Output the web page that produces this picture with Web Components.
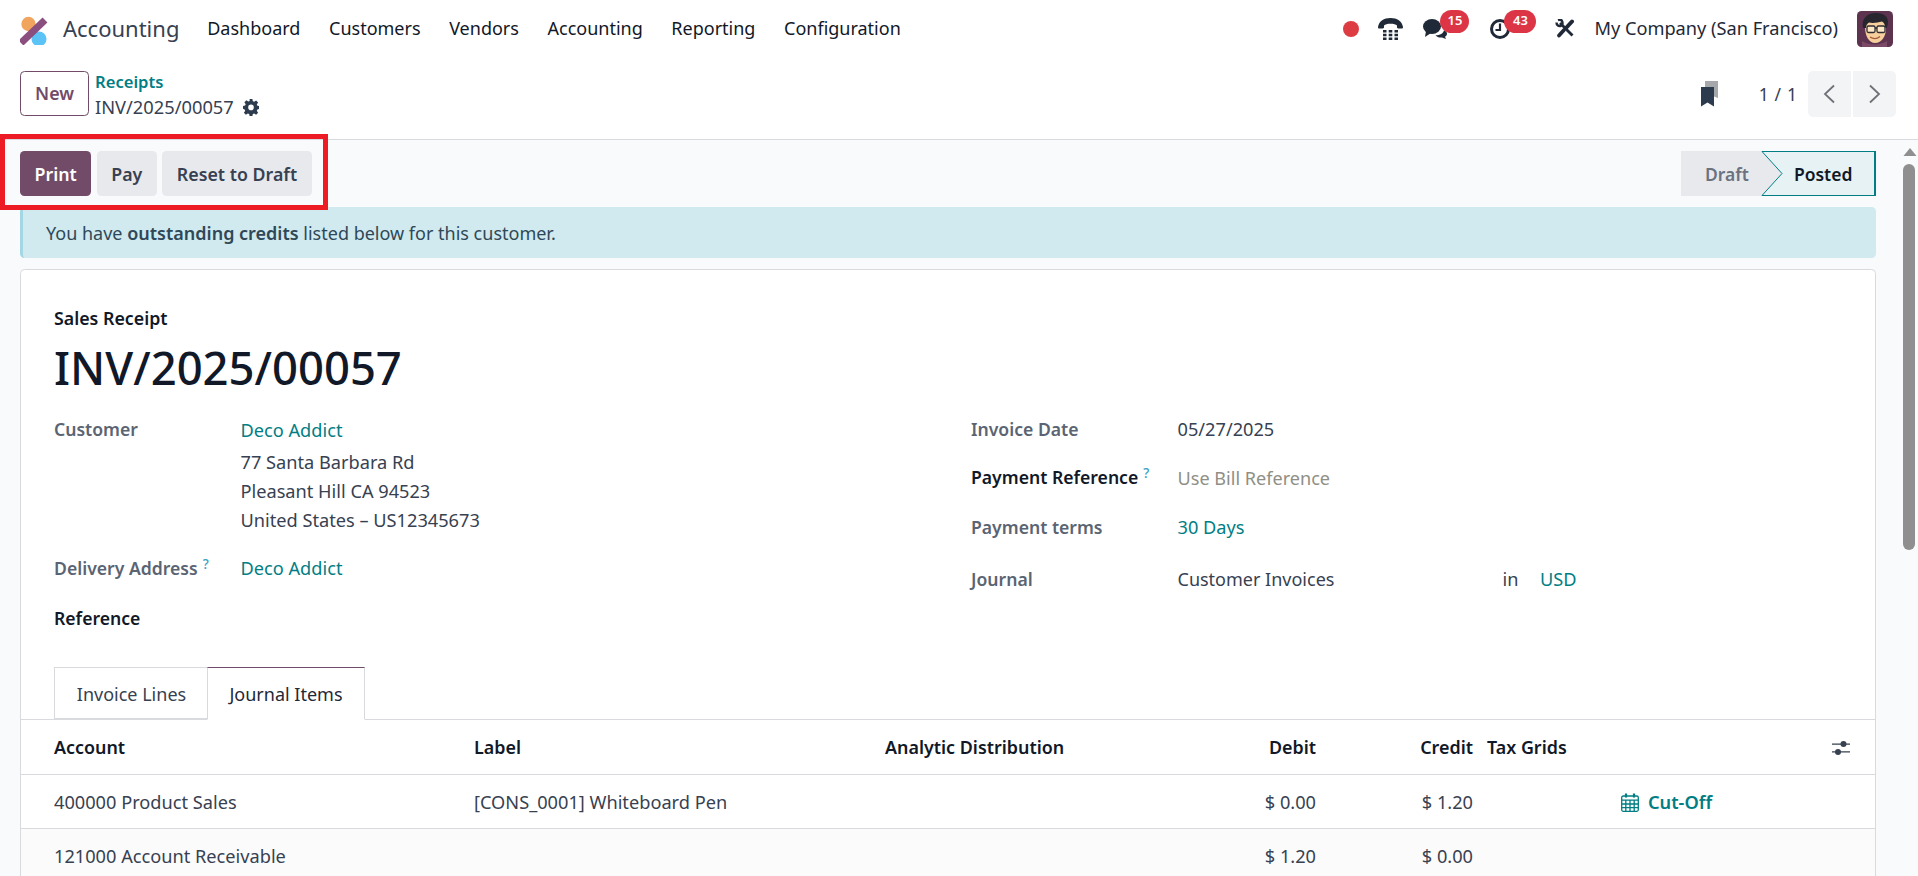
<!DOCTYPE html>
<html lang="en"><head><meta charset="utf-8"><title>Accounting</title>
<style>
html,body{margin:0;padding:0;height:100%;overflow:hidden;background:#fff}
body{font:18.2px/1.5 "Noto Sans","Open Sans",sans-serif;color:#374151}
</style></head><body>
<app-shell>
  <top-navbar slot="top"></top-navbar>
  <control-panel slot="top"></control-panel>
  <action-row>
    <act-btn kind="primary">Print</act-btn>
    <act-btn>Pay</act-btn>
    <act-btn>Reset to Draft</act-btn>
    <status-bar slot="end"></status-bar>
  </action-row>
  <info-alert>You have <b>outstanding credits</b> listed below for this customer.</info-alert>
  <form-card>
    <form-head></form-head>
    <form-groups slot="groups"></form-groups>
    <journal-tabs slot="tabs"></journal-tabs>
    <journal-table slot="table"></journal-table>
  </form-card>
</app-shell>
<script>
function def(name, html, init){
  customElements.define(name, class extends HTMLElement{
    constructor(){super();const r=this.attachShadow({mode:'open'});r.innerHTML=html;}
    connectedCallback(){if(init)init(this);}
  });
}
def('app-shell',`<style>
:host{display:flex;flex-direction:column;height:100vh;overflow:hidden;position:relative}
.main{flex:1;min-height:0;display:flex;background:#f9fafb}
.content{flex:1;min-width:0;padding:11px 25px 0 20px;overflow:hidden}
.red{position:absolute;left:0;top:134px;width:328px;height:76px;box-sizing:border-box;border:5px solid #ed1c24;pointer-events:none}
</style><slot name="top"></slot><div class="main"><div class="content"><slot></slot></div><page-scrollbar></page-scrollbar></div><div class="red"></div>`);

def('page-scrollbar',`<style>
:host{display:block;width:17px;flex:none;position:relative}
svg{display:block;margin:8px 0 0 2px}
.thumb{width:12px;height:386px;margin:8px 0 0 2px;border-radius:6px;background:#8f8f8f}
</style><svg width="14" height="8" viewBox="0 0 14 8"><path d="M7 0l6.5 8H.5z" fill="#8f8f8f"/></svg><div class="thumb"></div>`);

def('top-navbar',`<style>
:host{display:flex;align-items:center;height:57px;padding:0 25px 0 20px;background:#fff;color:#111827;box-sizing:border-box;font-size:18px}
.logo{width:29px;height:30px;flex:none;margin-top:2px}
.brand{font-size:22px;color:#374151;margin:0 13.500px 0 14px}
a{margin:0 14.300px;white-space:nowrap}
.tray{margin-left:auto;display:flex;align-items:center;height:100%}
.i{position:relative;display:flex;flex:none;align-items:center}
.b{position:absolute;top:9px;height:23px;border-radius:12px;background:#dc3545;color:#fff;font-size:13px;font-weight:600;display:flex;align-items:center;justify-content:center}
.co{margin:0 19px;white-space:nowrap;font-size:18.2px;color:#1f2937}
</style>
<svg class="logo" viewBox="0 0 29 30"><circle cx="8.500" cy="9" r="7.200" fill="#f0a45e"/><circle cx="19" cy="24" r="7.500" fill="#5cc3f7"/><path d="M1 28L25 5" stroke="#8b4f7f" stroke-width="7"/></svg>
<span class="brand">Accounting</span>
<a>Dashboard</a><a>Customers</a><a>Vendors</a><a>Accounting</a><a>Reporting</a><a>Configuration</a>
<div class="tray">
<span class="i"><svg width="16" height="16"><circle cx="8" cy="8" r="8" fill="#dc3c42"/></svg></span>
<span class="i" style="margin-left:19px"><svg width="25" height="22" viewBox="0 0 25 22" fill="#1f2937"><path d="M0 9C1 3 6 0 12.500 0S24 3 25 9c0 1-.5 1.500-1.200 1.500h-3.600c-.8 0-1.200-.5-1.200-1.200V7.500c-1-1.200-3.500-1.700-6.500-1.700S7 6.300 6 7.500v1.800c0 .7-.4 1.200-1.200 1.200H1.200C.5 10.500 0 10 0 9z"/><path d="M5 12h3.500v2.400H5zM10.700 12h3.600v2.400h-3.600zM16.500 12H20v2.400h-3.500zM5 15.800h3.500v2.400H5zM10.700 15.800h3.600v2.400h-3.600zM16.500 15.800H20v2.400h-3.500zM5 19.600h3.500V22H5zM10.700 19.600h3.600V22h-3.600zM16.500 19.600H20V22h-3.500z"/></svg></span>
<span class="i" style="margin-left:20px;width:24px;height:20px"><svg width="24" height="20" viewBox="0 0 24 20" fill="#1f2937"><ellipse cx="9" cy="7.500" rx="9" ry="7.500"/><path d="M3 12l-1 6 6-4z"/><path d="M12.500 16.200c4.500 0 8-2 8.500-5 2 .8 3 2 3 3.500 0 1.300-.9 2.400-2 3l1 2.300-4-1.600c-2.600.4-5-.5-6.500-2.200z"/></svg><span class="b" style="left:17px;width:29px;top:-9px">15</span></span>
<span class="i" style="margin-left:43px;width:20px;height:20px"><svg width="20" height="20" viewBox="0 0 20 20" fill="none" stroke="#1f2937"><circle cx="10" cy="10" r="8.500" stroke-width="3"/><path d="M10 4.500V11H5.500" stroke-width="2.200"/></svg><span class="b" style="left:14px;width:32px;top:-9px">43</span></span>
<span class="i" style="margin-left:45px"><svg width="20" height="20" viewBox="0 0 20 20" fill="none" stroke="#1f2937"><path d="M17 2.500L11 9" stroke-width="4" stroke-linecap="round"/><path d="M4 16.500L9 11" stroke-width="3.800" stroke-linecap="round"/><path d="M17.500 16.500L5 4" stroke-width="2.800"/><path d="M1.500 3.500c0 2.500 2 4 4 3.500S8 4 7 2 4.500 .5 3 1" stroke-width="2.400" fill="none"/></svg></span>
<span class="co">My Company (San Francisco)</span>
<svg width="36" height="36" viewBox="0 0 36 36" style="flex:none"><rect width="36" height="36" rx="4.500" fill="#5d3350"/><path d="M5 30c6 4 18 5 25 0v6H5z" fill="#7b4a66"/><path d="M8 16c0-6 5-9 11-9s10 4 10 10c0 8-4 15-11 15-6 0-10-7-10-16z" fill="#f6cf9c"/><path d="M6 17C4 8 10 2 19 2c7 0 12 3 12 9 0 2-.5 4-1.500 6l-1.500-.5c0-3-1-5-3-6-4 1-9 2-13 1-2 1-3 3-3 5.500z" fill="#27262f"/><rect x="10" y="15" width="8" height="6.500" rx="1.500" fill="#fbe7c4" stroke="#2e2b33" stroke-width="1.300"/><rect x="20" y="15" width="8" height="6.500" rx="1.500" fill="#fbe7c4" stroke="#2e2b33" stroke-width="1.300"/><path d="M18 17h2" stroke="#2e2b33" stroke-width="1.300"/><path d="M13 26c3 2 7 2 10-.5" stroke="#a35a3e" stroke-width="1.400" fill="none"/></svg>
</div>`);

def('control-panel',`<style>
:host{display:flex;align-items:flex-start;height:83px;box-sizing:border-box;padding:14px 22px 0 20px;background:#fff;border-bottom:1px solid #d8dadd}
.new{box-sizing:border-box;width:69px;height:45px;border:1px solid #714b67;border-radius:4.500px;display:flex;align-items:center;justify-content:center;color:#714b67;font-weight:600;flex:none;font-size:17.800px}
.crumb{margin-left:6px;line-height:24px;margin-top:-1px}
.crumb a{display:block;color:#017e84;font-weight:600;font-size:16.600px}
.crumb div{display:flex;align-items:center;gap:9px;color:#374151;margin-top:1px;font-size:18.300px}
.right{margin-left:auto;display:flex;align-items:center;height:46px}
.pg{margin:0 10.500px 0 41px;letter-spacing:.6px;color:#374151;font-size:17.500px}
.nb{width:43px;height:46px;background:#f3f4f6;display:flex;align-items:center;justify-content:center}
.nb.l{border-radius:5px 0 0 5px;margin-right:2px}.nb.r{border-radius:0 5px 5px 0}
</style>
<div class="new">New</div>
<div class="crumb"><a>Receipts</a><div>INV/2025/00057<svg width="16" height="17" viewBox="0 0 16 17" fill="#2d3b4e"><path fill-rule="evenodd" d="M6.600 0h2.800l.4 2.200 1.400.6 1.900-1.300 2 2-1.300 1.900.6 1.400 2.100.4v2.800l-2.100.4-.6 1.400 1.300 1.900-2 2-1.900-1.300-1.400.6-.4 2.200H6.600l-.4-2.200-1.400-.6-1.900 1.300-2-2 1.300-1.900-.6-1.400L0 9.800V7l2.100-.4.600-1.400L1.400 3.300l2-2 1.900 1.300 1.400-.6zM8 5.600a2.800 2.800 0 100 5.600 2.800 2.800 0 000-5.600z"/></svg></div></div>
<div class="right">
<svg width="18" height="26" viewBox="0 0 18 26"><path d="M5 0h13v17l-4-1.500V6H5z" fill="#a7a8ac"/><path d="M1 6h13v19.500l-6.500-4-6.500 4z" fill="#2d3b4e"/></svg>
<span class="pg">1 / 1</span>
<div class="nb l"><svg width="13" height="20" viewBox="0 0 13 20" fill="none" stroke="#6f7177" stroke-width="1.800"><path d="M11 1.500L2 10l9 8.500"/></svg></div>
<div class="nb r"><svg width="13" height="20" viewBox="0 0 13 20" fill="none" stroke="#6f7177" stroke-width="1.800"><path d="M2 1.500L11 10l-9 8.500"/></svg></div>
</div>`);

def('action-row',`<style>
:host{display:flex;gap:5.500px;height:45px;margin-bottom:11px}
.end{margin-left:auto}
</style><slot></slot><div class="end"><slot name="end"></slot></div>`);

def('act-btn',`<style>
:host{display:flex;align-items:center;height:45px;padding:1px 14.500px 0;border-radius:4.500px;background:#e7e9ed;color:#374151;font-weight:600;font-size:17.800px;box-sizing:border-box;white-space:nowrap}
:host([kind=primary]){background:#714b67;color:#fff}
</style><slot></slot>`);

def('status-bar',`<style>
:host{display:flex;position:relative;width:195px;height:45px;font-weight:600;font-size:17.500px}
svg{position:absolute;inset:0}
span{position:relative;display:flex;align-items:center;height:46px}
.d{margin-left:24px;color:#6b7280}
.p{margin-left:45px;color:#111827}
</style><svg width="195" height="45" viewBox="0 0 195 45"><rect width="102" height="45" fill="#e7e9ed"/><path d="M81 .5L101 22.500 81 44.500H194V.5z" fill="#e6f2f3"/><path d="M81 .5L101 22.500 81 44.500" fill="none" stroke="#017e84"/><path d="M81 .5H194.500V44.500H81" fill="none" stroke="#017e84"/><path d="M194 0v45" stroke="#017e84" stroke-width="2"/></svg><span class="d">Draft</span><span class="p">Posted</span>`);

def('info-alert',`<style>
:host{display:flex;align-items:center;height:51px;box-sizing:border-box;padding:1.500px 23px 0;background:#d0eaef;border-radius:4.500px;border-left:3px solid #a5d6e4;color:#2f4858;margin-bottom:11px;font-size:18px}
::slotted(b){font-weight:600}
</style><span><slot></slot></span>`);

def('form-card',`<style>
:host{display:block;background:#fff;border:1px solid #d8dadd;border-radius:4.500px 4.500px 0 0;height:800px;box-sizing:border-box}
.pad{padding:34px 33px 0 33px}
</style><div class="pad"><slot></slot><slot name="groups"></slot></div><slot name="tabs"></slot><slot name="table"></slot>`);

def('form-head',`<style>
:host{display:block;color:#111827}
.t{font-weight:600;font-size:17.800px;line-height:28px}
h1{margin:3px 0 0;font-size:45.400px;font-weight:500;line-height:64px;color:#111827}
</style><div class="t">Sales Receipt</div><h1>INV/2025/00057</h1>`);

def('form-field',`<style>
:host{display:grid;grid-template-columns:var(--lw,187px) 1fr;line-height:29px;min-height:29px;margin-bottom:var(--mb,0)}
.l{font-weight:600;font-size:17.600px;color:#5b6472}
:host([strong]) .l{color:#111827}
</style><div class="l"><slot name="label"></slot></div><div><slot></slot></div>`);

def('help-mark',`<style>:host{font-size:13.500px;color:#3a9fc4;vertical-align:6px;font-weight:500;margin-left:5px;line-height:0}</style><slot></slot>`);
def('link-text',`<style>:host{color:#017e84}</style><slot></slot>`);

def('form-groups',`<style>
:host{display:grid;grid-template-columns:917px 1fr;margin-top:15.500px}
.a{--lw:186.500px}.b{--lw:206.500px}
.mut{color:#8f8f85;position:relative;top:1px;font-size:18.100px}
.addr{display:block;margin-top:3px}.addr span{display:block}
.j{display:grid;grid-template-columns:325px 37.500px auto}
.j>span:first-child{font-size:18px}
</style>
<div class="a">
<form-field style="--mb:19px"><span slot="label">Customer</span><link-text style="display:block;padding-top:1px">Deco Addict</link-text><span class="addr"><span>77 Santa Barbara Rd</span><span>Pleasant Hill CA 94523</span><span>United States – US12345673</span></span></form-field>
<form-field style="--mb:21px"><span slot="label">Delivery Address<help-mark>?</help-mark></span><link-text>Deco Addict</link-text></form-field>
<form-field strong><span slot="label">Reference</span></form-field>
</div>
<div class="b">
<form-field style="--mb:19px"><span slot="label">Invoice Date</span>05/27/2025</form-field>
<form-field strong style="--mb:21px"><span slot="label">Payment Reference<help-mark>?</help-mark></span><span class="mut">Use Bill Reference</span></form-field>
<form-field style="--mb:23px"><span slot="label">Payment terms</span><link-text>30 Days</link-text></form-field>
<form-field><span slot="label">Journal</span><span class="j"><span>Customer Invoices</span><span>in</span><link-text>USD</link-text></span></form-field>
</div>`);

def('journal-tabs',`<style>
:host{display:flex;height:53px;box-sizing:border-box;padding-left:33px;margin-top:34.500px;border-bottom:1px solid #d8dadd;font-size:18px}
div{box-sizing:border-box;height:53px;display:flex;align-items:center;justify-content:center;border:1px solid #d8dadd;padding-top:2px}
.a{width:153px;border-right:0;height:52px;color:#374151;padding-left:1px}
.b{width:158px;border-top:1px solid #714b67;background:#fff;border-bottom:1px solid #fff;color:#1f2937}
</style><div class="a">Invoice Lines</div><div class="b">Journal Items</div>`);

def('table-row',`<style>
:host{display:grid;grid-template-columns:420px 411px 300px 131px 157px 14px 134px 1fr;align-items:center;height:54.500px;box-sizing:border-box;padding:2px 0 0 33px;border-bottom:1px solid #d8dadd;white-space:nowrap}
:host([head]){font-weight:600;color:#111827;font-size:17.900px}
:host([alt]){background:#fbfbfb}
::slotted(.n){text-align:right}
::slotted(.tax){grid-column:7}
::slotted(.cut){display:flex;align-items:center;gap:9px;color:#017e84;font-weight:600;grid-column:8}
::slotted(.set){grid-column:8;justify-self:end;margin-right:25.500px;display:flex}
</style><slot></slot>`);

def('journal-table',`<style>:host{display:block}</style>
<table-row head><span>Account</span><span>Label</span><span>Analytic Distribution</span><span class="n">Debit</span><span class="n">Credit</span><span class="tax">Tax Grids</span><span class="set"><svg width="18" height="16" viewBox="0 0 18 16" fill="#374151"><path d="M0 3.500h18v1.200H0zM0 11.300h18v1.200H0z"/><circle cx="11.500" cy="4" r="3"/><circle cx="6" cy="12" r="3"/></svg></span></table-row>
<table-row><span>400000 Product Sales</span><span>[CONS_0001] Whiteboard Pen</span><span></span><span class="n">$ 0.00</span><span class="n">$ 1.20</span><span class="cut"><svg width="18" height="19" viewBox="0 0 18 19" fill="none" stroke="#017e84" stroke-width="1.300"><rect x=".7" y="3" width="16.600" height="15.300" rx="1.500"/><path d="M.7 7.200h16.600M.7 11h16.600M.7 14.700h16.600M4.800 7.200v11M9 7.200v11M13.200 7.200v11"/><path d="M5 .5v4M13 .5v4" stroke-width="2.200"/></svg>Cut-Off</span></table-row>
<table-row alt><span>121000 Account Receivable</span><span></span><span></span><span class="n">$ 1.20</span><span class="n">$ 0.00</span></table-row>`);
</script>
</body></html>
